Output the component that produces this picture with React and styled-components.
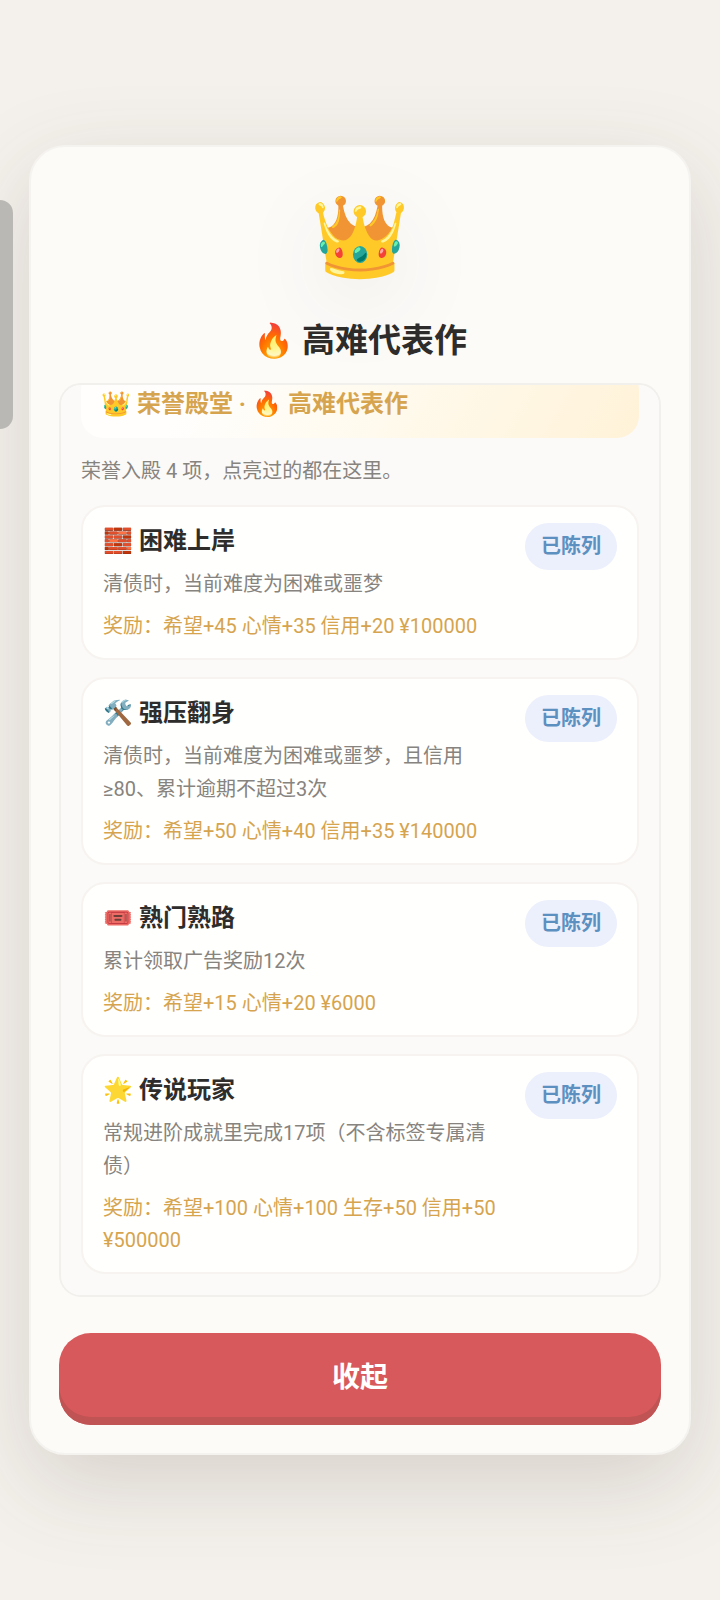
import React, { useLayoutEffect, useRef } from 'react'
import styled, { createGlobalStyle } from 'styled-components';

const GlobalStyle = createGlobalStyle`
  *, *::before, *::after { box-sizing: border-box; }
  body {
    margin: 0;
    background: #f4f1ec;
    color: #2e2d2b;
    font-family: Roboto, 'Noto Sans CJK SC', 'Noto Color Emoji', sans-serif;
  }
  h1, h2, h3, p, ul { margin: 0; padding: 0; }
`;

const Page = styled.div`
  min-height: 100vh;
  padding: 29px;
  display: flex;
  align-items: center;
  justify-content: center;
`;

const SideTab = styled.div`
  position: fixed;
  top: 200px;
  left: 0;
  width: 13px;
  height: 229px;
  border-radius: 0 14px 14px 0;
  background: #bab8b4;
`;

const Dialog = styled.main`
  width: 100%;
  max-width: 800px;
  padding: 42px 28px 28px;
  display: flex;
  flex-direction: column;
  border: 2px solid #f5f3f0;
  border-radius: 36px;
  background: #fcfbf8;
  box-shadow: 0 28px 90px rgba(76, 56, 44, 0.17);
`;

const Hero = styled.div`
  align-self: center;
  font-size: 80px;
  line-height: 96px;
  filter: drop-shadow(0 20px 40px rgba(40, 40, 50, 0.08));
`;

const Heading = styled.h1`
  margin: 32px 0 18px;
  display: flex;
  align-items: center;
  justify-content: center;
  gap: 8px;
  font-size: 33px;
  line-height: 48px;
`;

const Panel = styled.section`
  max-height: calc(57vh + 2px);
  padding: 20px 20px 21px;
  display: grid;
  gap: 17px;
  overflow-y: auto;
  scrollbar-width: none;
  border: 2px solid #f2f0ed;
  border-radius: 22px;
  background: #fbfaf8;
`;

const Banner = styled.h2`
  padding: 18px 20px 16px;
  display: flex;
  align-items: center;
  gap: 6px;
  border-radius: 22px;
  background: linear-gradient(120deg, #fffefd 20%, #fffaed 55%, #fff2d8);
  color: #d6a44f;
  font-size: 24px;
  line-height: 36px;
`;

const Note = styled.p`
  color: #87837e;
  font-size: 20px;
  line-height: 33px;
`;

const List = styled.ul`
  display: grid;
  gap: 17px;
  list-style: none;
`;

const Item = styled.li`
  padding: 16px 20px;
  display: flex;
  align-items: flex-start;
  gap: 24px;
  border: 2px solid #f6f3f0;
  border-radius: 24px;
  background: #fffffd;
`;

const Content = styled.div`
  flex: 1;
  min-width: 0;

  h3 {
    display: flex;
    align-items: center;
    gap: 6px;
    font-size: 24px;
    line-height: 36px;
  }
`;

const Desc = styled.p`
  margin-top: 9px;
  color: #87837e;
  font-size: 20px;
  line-height: 33px;
`;

const Reward = styled.p`
  margin-top: 9px;
  color: #d6a44f;
  font-size: 20px;
  line-height: 32px;
`;

const Badge = styled.span`
  flex: none;
  padding: 8px 16px;
  border-radius: 24px;
  background: #eceffc;
  color: #5b90c0;
  font-size: 20px;
  font-weight: 700;
  line-height: 31px;
`;

const CloseButton = styled.button`
  margin-top: 36px;
  padding: 25px 20px 27px;
  border: 0;
  border-radius: 32px;
  background: #d8595b;
  box-shadow: inset 0 -8px 0 #c05354;
  color: #fff;
  font: inherit;
  font-size: 28px;
  font-weight: 700;
  line-height: 40px;
  cursor: pointer;
`;

const items = [
  { icon: '🧱', title: '困难上岸', desc: '清债时，当前难度为困难或噩梦', reward: '希望+45 心情+35 信用+20 ¥100000' },
  { icon: '🛠️', title: '强压翻身', desc: '清债时，当前难度为困难或噩梦，且信用≥80、累计逾期不超过3次', reward: '希望+50 心情+40 信用+35 ¥140000' },
  { icon: '🎟️', title: '熟门熟路', desc: '累计领取广告奖励12次', reward: '希望+15 心情+20 ¥6000' },
  { icon: '🌟', title: '传说玩家', desc: '常规进阶成就里完成17项（不含标签专属清债）', reward: '希望+100 心情+100 生存+50 信用+50 ¥500000' },
];

const App = () => {
  const panel = useRef(null);

  useLayoutEffect(() => {
    panel.current.scrollTop = panel.current.scrollHeight;
  }, []);

  return (
    <Page>
      <GlobalStyle />
      <SideTab />
      <Dialog>
        <Hero>👑</Hero>
        <Heading><span>🔥</span>高难代表作</Heading>
        <Panel ref={panel}>
          <Banner><span>👑</span>荣誉殿堂 ·<span>🔥</span>高难代表作</Banner>
          <Note>荣誉入殿 4 项，点亮过的都在这里。</Note>
          <List>
            {items.map(item => (
              <Item key={item.title}>
                <Content>
                  <h3><span>{item.icon}</span>{item.title}</h3>
                  <Desc>{item.desc}</Desc>
                  <Reward>奖励：{item.reward}</Reward>
                </Content>
                <Badge>已陈列</Badge>
              </Item>
            ))}
          </List>
        </Panel>
        <CloseButton type="button">收起</CloseButton>
      </Dialog>
    </Page>
  )
}

export default App;
